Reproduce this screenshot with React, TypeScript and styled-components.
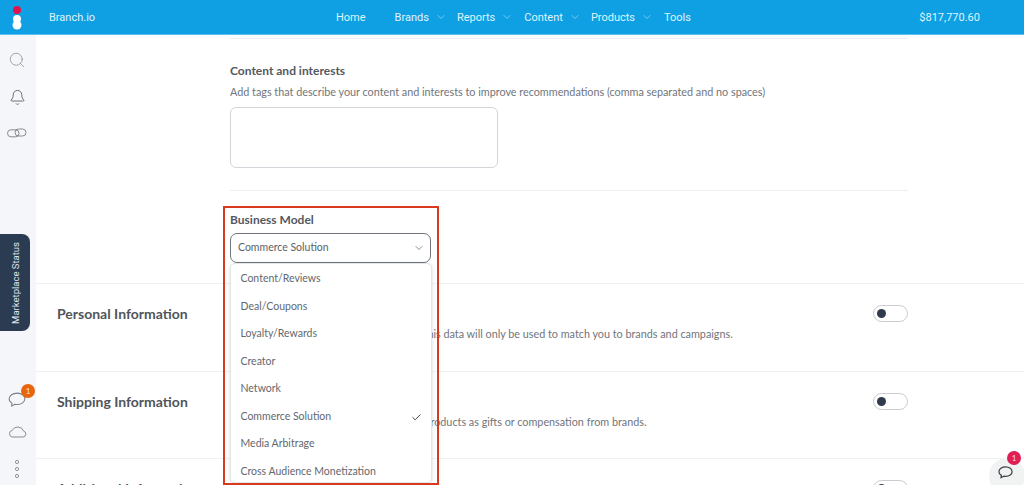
import React from "react";
import styled, { createGlobalStyle } from "styled-components";
import { Search, Bell, ChevronDown, Check } from "lucide-react";

const Global = createGlobalStyle`
  html, body { margin: 0; padding: 0; height: 100%; overflow: hidden; background: #fff; }
  body { font-family: "Lato", "Noto Sans", sans-serif; color: #4a5058; }
  #root { height: 100%; }
`;

const Page = styled.div`
  width: 1024px;
  height: 485px;
  overflow: hidden;
  position: relative;
  display: flex;
  flex-direction: column;
`;

const Header = styled.header`
  height: 34px;
  flex: none;
  background: #0fa0e3;
  border-bottom: 1px solid #5cc0ee;
  display: flex;
  align-items: center;
  font-family: "Roboto", sans-serif;
  font-size: 11px;
  color: #dff4ff;
`;

const Logo = styled.svg`
  width: 34px;
  height: 34px;
  flex: none;
`;

const Brand = styled.div`
  margin-left: 15px;
  width: 287px;
`;

const Nav = styled.nav`
  display: flex;
  align-items: center;
`;

const NavItem = styled.div<{ $gap: number }>`
  display: flex;
  align-items: center;
  gap: 6px;
  margin-right: ${(p) => p.$gap}px;
  white-space: nowrap;
  svg { width: 12px; height: 12px; stroke-width: 1.2; opacity: 0.85; }
`;

const Balance = styled.div`
  margin-left: auto;
  margin-right: 44px;
`;

const Body = styled.div`
  flex: 1;
  display: flex;
  min-height: 0;
`;

const Sidebar = styled.aside`
  width: 36px;
  flex: none;
  background: #f4f6fa;
  display: flex;
  flex-direction: column;
  align-items: flex-start;
  padding-top: 17px;
  color: #7a7f85;
`;

const SideIcon = styled.div<{ $mb: number }>`
  width: 34px;
  height: 16px;
  display: flex;
  align-items: center;
  justify-content: center;
  margin-bottom: ${(p) => p.$mb}px;
  position: relative;
  flex: none;
`;

const SideBadge = styled.span`
  position: absolute;
  right: -1px;
  top: -8px;
  width: 14px;
  height: 14px;
  border-radius: 50%;
  background: #e8650f;
  color: #ffe9d6;
  font-size: 8px;
  line-height: 14px;
  text-align: center;
`;

const StatusTab = styled.div`
  width: 30px;
  height: 97px;
  flex: none;
  background: #2b3c52;
  border-radius: 0 8px 8px 0;
  display: flex;
  align-items: center;
  justify-content: center;
  margin-top: 93px;
  margin-bottom: 61px;
  color: #dfe6ee;
  font-family: "Roboto", sans-serif;
  font-size: 9.5px;
  span { writing-mode: vertical-rl; transform: rotate(180deg); white-space: nowrap; }
`;

const Main = styled.main`
  flex: 1;
  min-width: 0;
  overflow: hidden;
`;

const TopSection = styled.section`
  padding: 3px 116px 0 194px;
  height: 248px;
  box-sizing: border-box;
`;

const HairLine = styled.div<{ $mb: number }>`
  height: 1px;
  background: #eceef0;
  margin-bottom: ${(p) => p.$mb}px;
`;

const FieldTitle = styled.h3<{ $mb: number }>`
  margin: 0 0 ${(p) => p.$mb}px;
  font-size: 12px;
  line-height: 14px;
  font-weight: 700;
  color: #54595f;
`;

const Hint = styled.p`
  margin: 0 0 8px;
  font-size: 10.8px;
  line-height: 14px;
  color: #70757b;
  white-space: nowrap;
`;

const TextBox = styled.div`
  width: 268px;
  height: 61px;
  box-sizing: border-box;
  border: 1px solid #d2d5d9;
  border-radius: 6px;
  margin-bottom: 22px;
`;

const SelectBox = styled.div`
  width: 201px;
  height: 30px;
  box-sizing: border-box;
  border: 1px solid #70757b;
  border-radius: 7px;
  display: flex;
  align-items: center;
  justify-content: space-between;
  padding: 0 5px 2px 7px;
  font-size: 10.5px;
  color: #5a5f65;
  svg { width: 12px; height: 12px; color: #4a4f55; margin-top: 2px; }
`;

const InfoRow = styled.section`
  height: 87.5px;
  box-sizing: border-box;
  border-top: 1px solid #f0f1f3;
  padding: 21px 116px 0 21px;
  display: grid;
  grid-template-columns: 173px 1fr 35px;
  align-items: start;
`;

const RowTitle = styled.h2`
  margin: 0;
  font-size: 14px;
  line-height: 17px;
  font-weight: 700;
  color: #50555b;
  white-space: nowrap;
`;

const RowHint = styled.p`
  margin: 22px 0 0;
  font-size: 10.8px;
  line-height: 14px;
  color: #70757b;
  white-space: nowrap;
`;

const Toggle = styled.div`
  width: 35px;
  height: 17px;
  box-sizing: border-box;
  border: 1px solid #c8cbcf;
  border-radius: 9px;
  display: flex;
  align-items: center;
  padding-left: 3px;
  &::before {
    content: "";
    width: 9px;
    height: 9px;
    border-radius: 50%;
    background: #2f3b4c;
  }
`;

const Annotation = styled.div`
  position: absolute;
  left: 223px;
  top: 206px;
  width: 216px;
  height: 279px;
  box-sizing: border-box;
  border: 2px solid #d8391f;
  pointer-events: none;
`;

const Dropdown = styled.ul`
  position: absolute;
  left: 230px;
  top: 263px;
  width: 202px;
  height: 220px;
  box-sizing: border-box;
  margin: 0;
  padding: 0.6px 0 0;
  list-style: none;
  background: #fff;
  border: 1px solid #e4e6ea;
  border-radius: 5px;
  box-shadow: 0 1px 4px rgba(60, 70, 90, 0.18);
  overflow: hidden;
`;

const DropItem = styled.li`
  height: 27.5px;
  padding: 0 9px 0 9.5px;
  display: flex;
  align-items: center;
  justify-content: space-between;
  font-size: 10.5px;
  color: #63686e;
  svg { width: 11px; height: 11px; color: #2f343a; margin-top: 4px; }
`;

const ChatBubble = styled.div`
  position: absolute;
  left: 989px;
  top: 458px;
  width: 36px;
  height: 36px;
  border-radius: 50%;
  background: #f1f2f2;
  display: flex;
  justify-content: center;
  color: #3b4048;
  padding: 8px 4px 0 0;
  box-sizing: border-box;
`;

const ChatBadge = styled.span`
  position: absolute;
  left: 1007px;
  top: 451px;
  width: 14px;
  height: 14px;
  border-radius: 50%;
  background: #e01f55;
  color: #ffdbe5;
  font-size: 8px;
  line-height: 14px;
  text-align: center;
`;

const options = [
  "Content/Reviews",
  "Deal/Coupons",
  "Loyalty/Rewards",
  "Creator",
  "Network",
  "Commerce Solution",
  "Media Arbitrage",
  "Cross Audience Monetization",
];

const ChatIcon = ({ w, sw }: { w: number; sw: number }) => (
  <svg width={w} height={(w * 14) / 16} viewBox="0 0 16 14" fill="none" stroke="currentColor" strokeWidth={sw} strokeLinejoin="round">
    <path d="M8.2 1C4.3 1 1 3.2 1 6.1c0 1.6 1 3 2.6 3.9l-.5 2.6 3-1.7c.7.1 1.4.2 2.1.2 3.9 0 6.8-2.2 6.8-5S12.1 1 8.2 1z" />
  </svg>
);

export default function App() {
  return (
    <Page>
      <Global />
      <Header>
        <Logo viewBox="0 0 34 34">
          <circle cx="17" cy="10" r="4" fill="#e0144c" />
          <circle cx="17" cy="19" r="4" fill="#fff" />
          <circle cx="17" cy="25" r="4.5" fill="#fff" />
        </Logo>
        <Brand>Branch.io</Brand>
        <Nav>
          <NavItem $gap={29}>Home</NavItem>
          <NavItem $gap={10}>Brands <ChevronDown /></NavItem>
          <NavItem $gap={11}>Reports <ChevronDown /></NavItem>
          <NavItem $gap={10}>Content <ChevronDown /></NavItem>
          <NavItem $gap={11}>Products <ChevronDown /></NavItem>
          <NavItem $gap={0}>Tools</NavItem>
        </Nav>
        <Balance>$817,770.60</Balance>
      </Header>
      <Body>
        <Sidebar>
          <SideIcon $mb={21}><Search size={18} strokeWidth={0.9} /></SideIcon>
          <SideIcon $mb={20}><Bell size={17} strokeWidth={1.1} color="#454a50" /></SideIcon>
          <SideIcon $mb={0}>
            <svg width="20" height="10" viewBox="0 0 20 10" fill="none" stroke="currentColor" strokeWidth="0.9">
              <rect x="0.5" y="1.8" width="11.5" height="7" rx="3.5" />
              <rect x="8" y="1" width="11" height="7" rx="3.5" />
            </svg>
          </SideIcon>
          <StatusTab><span>Marketplace Status</span></StatusTab>
          <SideIcon $mb={16}>
            <ChatIcon w={18} sw={0.9} />
            <SideBadge>1</SideBadge>
          </SideIcon>
          <SideIcon $mb={21}>
            <svg width="19" height="12" viewBox="0 0 19 12" fill="none" stroke="currentColor" strokeWidth="0.9" strokeLinejoin="round">
              <path d="M4 11H15a3 3 0 0 0 .6-5.9A6.2 6.2 0 0 0 4.2 4.4 3.4 3.4 0 0 0 4 11z" />
            </svg>
          </SideIcon>
          <SideIcon $mb={0}>
            <svg width="6" height="18" viewBox="0 0 6 18" fill="none" stroke="currentColor" strokeWidth="0.8">
              <circle cx="3" cy="2" r="1.6" />
              <circle cx="3" cy="9" r="1.6" />
              <circle cx="3" cy="16" r="1.6" />
            </svg>
          </SideIcon>
        </Sidebar>
        <Main>
          <TopSection>
            <HairLine $mb={25} />
            <FieldTitle $mb={7}>Content and interests</FieldTitle>
            <Hint>Add tags that describe your content and interests to improve recommendations (comma separated and no spaces)</Hint>
            <TextBox />
            <HairLine $mb={22} />
            <FieldTitle $mb={6}>Business Model</FieldTitle>
            <SelectBox>Commerce Solution <ChevronDown strokeWidth={1.3} /></SelectBox>
          </TopSection>
          <InfoRow>
            <RowTitle>Personal Information</RowTitle>
            <RowHint>Your personal information is private, and this data will only be used to match you to brands and campaigns.</RowHint>
            <Toggle />
          </InfoRow>
          <InfoRow>
            <RowTitle>Shipping Information</RowTitle>
            <RowHint>Add your mailing address here to receive products as gifts or compensation from brands.</RowHint>
            <Toggle />
          </InfoRow>
          <InfoRow>
            <RowTitle>Additional Information</RowTitle>
            <span />
            <Toggle />
          </InfoRow>
        </Main>
      </Body>
      <Dropdown>
        {options.map((o) => (
          <DropItem key={o}>
            {o}
            {o === "Commerce Solution" && <Check strokeWidth={2} />}
          </DropItem>
        ))}
      </Dropdown>
      <Annotation />
      <ChatBubble><ChatIcon w={15} sw={1.3} /></ChatBubble>
      <ChatBadge>1</ChatBadge>
    </Page>
  );
}
